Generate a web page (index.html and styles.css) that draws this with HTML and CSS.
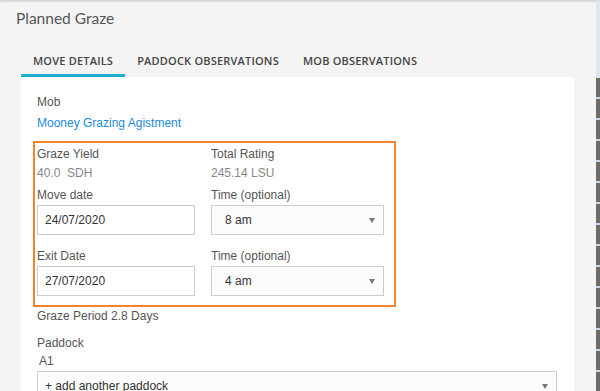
FILE: index.html
```html
<!DOCTYPE html>
<html lang="en">
<head>
  <meta charset="UTF-8">
  <meta name="viewport" content="width=device-width, initial-scale=1">
  <title>Planned Graze</title>
  <link rel="stylesheet" href="styles.css">
</head>
<body>

  <div class="modal">
    <h1 class="modal-title">Planned Graze</h1>

    <div class="tabs">
      <span class="tab active">Move details</span>
      <span class="tab">Paddock observations</span>
      <span class="tab">Mob observations</span>
    </div>

    <div class="card">
      <div class="field">
        <span class="label">Mob</span>
        <a class="link" href="#">Mooney Grazing Agistment</a>
      </div>

      <div class="highlight">
        <div class="row">
          <div class="col">
            <span class="label">Graze Yield</span>
            <span class="value">40.0&nbsp;&nbsp;SDH</span>
          </div>
          <div class="col">
            <span class="label">Total Rating</span>
            <span class="value">245.14 LSU</span>
          </div>
        </div>

        <div class="row">
          <div class="col">
            <span class="label">Move date</span>
            <div class="input date">24/07/2020</div>
          </div>
          <div class="col">
            <span class="label">Time (optional)</span>
            <div class="input select">8 am</div>
          </div>
        </div>

        <div class="row">
          <div class="col">
            <span class="label">Exit Date</span>
            <div class="input date">27/07/2020</div>
          </div>
          <div class="col">
            <span class="label">Time (optional)</span>
            <div class="input select">4 am</div>
          </div>
        </div>
      </div>

      <p class="period">Graze Period 2.8 Days</p>

      <div class="field paddock-field">
        <span class="label">Paddock</span>
        <span class="paddock">A1</span>
        <div class="input select wide">+ add another paddock</div>
      </div>
    </div>
  </div>

  <div class="edge"></div>

</body>
</html>
```

FILE: styles.css
```css
html, body {
  margin: 0;
  height: 100%;
  overflow: hidden;
}

body {
  display: flex;
  background: #dde7ee;
  font-family: 'Liberation Sans', Arial, sans-serif;
  font-size: 12px;
  color: #555;
}

.modal {
  flex: 1;
  background: #f4f4f4;
  box-shadow: inset 0 3px 3px -2px rgba(0, 0, 0, 0.2);
  padding: 0 0 0 21px;
}

.modal-title {
  margin: 0 0 0 -5px;
  padding-top: 9px;
  height: 30px;
  box-sizing: border-box;
  font-family: 'Lato', sans-serif;
  font-weight: 400;
  font-size: 15.5px;
  line-height: 18px;
  color: #555;
}

.tabs {
  display: flex;
  margin-top: 15px;
}

.tab {
  font-family: 'Open Sans', sans-serif;
  font-weight: 600;
  font-size: 11px;
  letter-spacing: 0.2px;
  line-height: 15px;
  text-transform: uppercase;
  color: #444;
  padding: 8px 12px 6px;
  border-bottom: 3px solid transparent;
}

.tab.active {
  border-bottom-color: #1eaed0;
}

.card {
  background: white;
  width: 553px;
  height: 330px;
  border-radius: 4px 4px 0 0;
  box-sizing: border-box;
  padding: 16px 0 0 16px;
}

.field {
  display: flex;
  flex-direction: column;
}

.label {
  line-height: 18px;
}

.link {
  color: #1a8bd6;
  text-decoration: none;
  margin-top: 3px;
  line-height: 18px;
}

.highlight {
  margin: 9px 0 0 -4px;
  width: 363px;
  height: 166px;
  border: 2px solid #f7822b;
  padding: 2px 0 0 2px;
  box-sizing: border-box;
}

.row {
  display: flex;
  gap: 16px;
  margin-bottom: 3px;
}

.row + .row + .row {
  margin-top: 12px;
}

.col {
  display: flex;
  flex-direction: column;
  width: 158px;
}

.col + .col {
  width: 173px;
}

.value {
  color: #888;
  line-height: 20px;
}

.input {
  height: 30px;
  box-sizing: border-box;
  border: 1px solid #ccc;
  padding: 0 7px;
  line-height: 28px;
  color: #333;
  margin-top: 1px;
  background: #fff;
}

.select {
  position: relative;
  padding-left: 13px;
  background: #fcfcfc;
}

.select::after {
  content: "";
  position: absolute;
  right: 8px;
  top: 12px;
  border-left: 3px solid transparent;
  border-right: 3px solid transparent;
  border-top: 5px solid #777;
}

.period {
  margin: 0;
  line-height: 18px;
}

.paddock-field {
  margin-top: 9px;
}

.paddock {
  margin-left: 2px;
  line-height: 18px;
}

.wide {
  width: 520px;
  padding-left: 7px;
}

.edge {
  width: 4px;
  background:
    repeating-linear-gradient(to bottom, #6b6b6b 0 19px, #c9d5df 19px 21px) 0 78px / 100% 100% no-repeat;
}
```
